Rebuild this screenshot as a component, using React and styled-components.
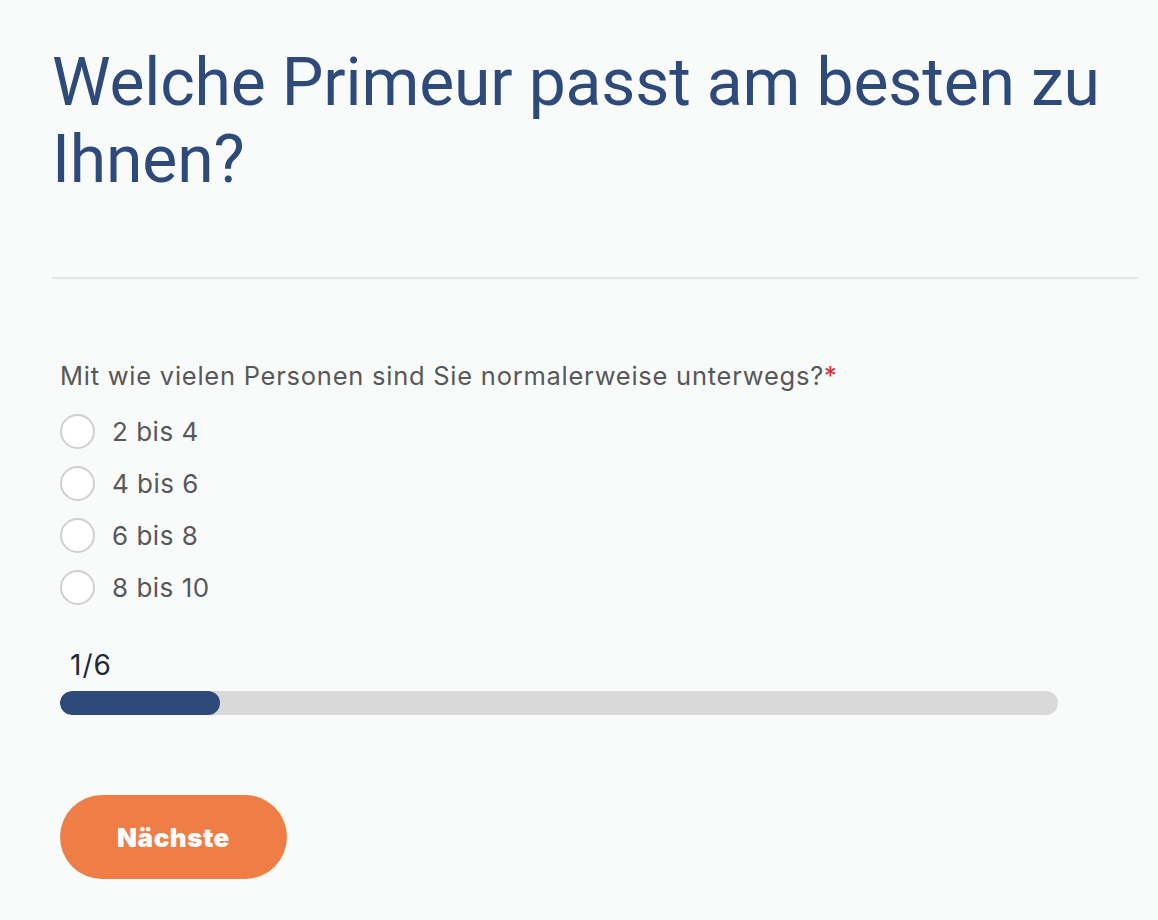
import React from "react";
import styled, { createGlobalStyle } from "styled-components";

const Global = createGlobalStyle`
  html, body { margin: 0; padding: 0; background: #f9fbfb; }
  body { font-family: "Inter", "Liberation Sans", sans-serif; }
`;

const Page = styled.div`
  padding: 44px 20px 40px 52px;
`;

const Title = styled.h1`
  margin: 0;
  font-family: "Roboto", "Liberation Sans", sans-serif;
  font-weight: 400;
  font-size: 66px;
  line-height: 77px;
  color: #2e4a7a;
  letter-spacing: -0.15px;
`;

const Divider = styled.hr`
  margin: 79px 0 0 0;
  border: 0;
  height: 2px;
  background: #e3e6e6;
`;

const Form = styled.div`
  padding: 81px 0 0 8px;
  display: flex;
  flex-direction: column;
`;

const Question = styled.div`
  font-size: 25.5px;
  line-height: 32px;
  color: #585858;
  letter-spacing: 0.75px;
`;

const Req = styled.span`
  color: #e02b2b;
`;

const Options = styled.div`
  display: flex;
  flex-direction: column;
  gap: 17px;
  margin-top: 22px;
`;

const Option = styled.label`
  display: flex;
  align-items: center;
  gap: 17px;
  font-size: 26px;
  line-height: 35px;
  color: #585858;
  cursor: pointer;
  letter-spacing: 0.5px;
`;

const Radio = styled.span`
  width: 31px;
  height: 31px;
  border: 2px solid #cfcfcf;
  border-radius: 50%;
  background: #fff;
  flex: none;
`;

const Step = styled.div`
  margin-top: 43px;
  padding-left: 10px;
  font-size: 28px;
  line-height: 34px;
  color: #1e2a3a;
  letter-spacing: 1px;
`;

const Track = styled.div`
  margin-top: 9px;
  width: 998px;
  height: 24px;
  border-radius: 12px;
  background: #d9d9d9;
  overflow: hidden;
`;

const Fill = styled.div`
  height: 100%;
  border-radius: 12px;
  background: #2e4a7a;
`;

const Button = styled.button`
  margin-top: 80px;
  width: 227px;
  height: 84px;
  border: 0;
  border-radius: 42px;
  background: #ef7d46;
  color: #fff;
  font-family: "Inter", "Liberation Sans", sans-serif;
  font-weight: 900;
  font-size: 26px;
  letter-spacing: 0.5px;
  cursor: pointer;
`;

const options = ["2 bis 4", "4 bis 6", "6 bis 8", "8 bis 10"];

export default function App() {
  const step = 1;
  const total = 6;
  return (
    <Page>
      <Global />
      <Title>Welche Primeur passt am besten zu Ihnen?</Title>
      <Divider />
      <Form>
        <Question>
          Mit wie vielen Personen sind Sie normalerweise unterwegs?<Req>*</Req>
        </Question>
        <Options>
          {options.map((o) => (
            <Option key={o}>
              <Radio />
              {o}
            </Option>
          ))}
        </Options>
        <Step>
          {step}/{total}
        </Step>
        <Track>
          <Fill style={{ width: `${(160 / 998) * 100}%` }} />
        </Track>
        <div>
          <Button>Nächste</Button>
        </div>
      </Form>
    </Page>
  );
}
